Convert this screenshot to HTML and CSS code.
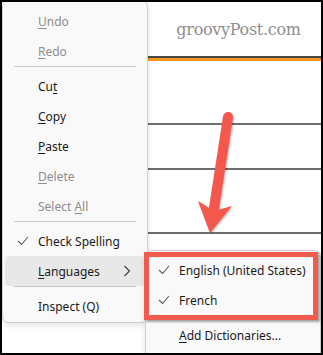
FILE: index.html
```html
<!DOCTYPE html>
<html lang="en">
<head>
  <meta charset="UTF-8" />
  <meta name="viewport" content="width=device-width, initial-scale=1" />
  <title>Context menu - Languages</title>
  <link rel="stylesheet" href="styles.css">
</head>
<body>
  <div class="frame">

    <!-- page behind the menu -->
    <div class="page">
      <div class="site-header">
        <span class="logo">groovyPost.com</span>
      </div>
      <div class="rule-dark"></div>
      <div class="rule-orange"></div>
      <div class="row row-tall"></div>
      <div class="row row-short"></div>
      <div class="row row-tall"></div>
    </div>

    <!-- context menu -->
    <ul class="menu">
      <li class="item disabled"><span><u>U</u>ndo</span></li>
      <li class="item disabled"><span><u>R</u>edo</span></li>
      <li class="sep"></li>
      <li class="item"><span>Cu<u>t</u></span></li>
      <li class="item"><span><u>C</u>opy</span></li>
      <li class="item"><span><u>P</u>aste</span></li>
      <li class="item disabled"><span><u>D</u>elete</span></li>
      <li class="item disabled"><span>Select <u>A</u>ll</span></li>
      <li class="sep"></li>
      <li class="item">
        <svg class="check" width="12" height="10" viewBox="0 0 12 10">
          <path d="M1 5 L4.5 8.5 L11 1" />
        </svg>
        <span>Check Spelling</span>
      </li>
      <li class="item active">
        <span><u>L</u>anguages</span>
        <svg class="chevron" width="8" height="12" viewBox="0 0 8 12">
          <path d="M1.5 1 L6.5 6 L1.5 11" />
        </svg>
      </li>
      <li class="sep"></li>
      <li class="item"><span>Inspect (Q)</span></li>
    </ul>

    <!-- languages submenu -->
    <ul class="menu submenu">
      <li class="item">
        <svg class="check" width="12" height="10" viewBox="0 0 12 10">
          <path d="M1 5 L4.5 8.5 L11 1" />
        </svg>
        <span>English (United States)</span>
      </li>
      <li class="item">
        <svg class="check" width="12" height="10" viewBox="0 0 12 10">
          <path d="M1 5 L4.5 8.5 L11 1" />
        </svg>
        <span>French</span>
      </li>
      <li class="sep"></li>
      <li class="item"><span><u>A</u>dd Dictionaries...</span></li>
    </ul>

    <!-- annotation -->
    <div class="callout"></div>
    <svg class="arrow" width="323" height="355" viewBox="0 0 323 355">
      <line x1="228" y1="117" x2="214" y2="208" />
      <polygon points="210,233 198,201 214,211 232,206" />
    </svg>
  </div>
</body>
</html>
```

FILE: styles.css
```css
*, *::before, *::after {
  box-sizing: border-box;
}

body {
  margin: 0;
  font-family: 'Noto Sans', 'Open Sans', sans-serif;
  background: #ffffff;
}

.frame {
  position: relative;
  width: 323px;
  height: 355px;
  border: 2px solid #000;
  background: #fff;
  overflow: hidden;
}

/* Page behind */
.page {
  padding-left: 146px;
}

.site-header {
  height: 54px;
  padding-left: 8px;
  display: flex;
  align-items: center;
  justify-content: center;
}

.logo {
  font-family: 'DejaVu Serif', 'Liberation Serif', serif;
  font-size: 16px;
  color: #8e8e8e;
  letter-spacing: -0.3px;
}

.rule-dark {
  height: 2px;
  background: #4a4a4a;
}

.rule-orange {
  height: 3px;
  background: #f7941d;
}

.row {
  border-bottom: 2px solid #6e6e6e;
}

.row-tall {
  height: 64px;
}

.row-short {
  height: 45px;
}

/* Menu */
.menu {
  position: absolute;
  left: 0;
  top: -2px;
  width: 146px;
  margin: 0;
  padding: 5px 0 1px;
  list-style: none;
  background: #f9f9f9;
  border: 1px solid #cfcfcf;
  border-radius: 7px;
  box-shadow: 0 2px 6px rgba(0, 0, 0, 0.12);
}

.item {
  position: relative;
  height: 30px;
  display: flex;
  align-items: center;
  padding-left: 35px;
  font-size: 12px;
  color: #1b1b1b;
  white-space: nowrap;
}

.item u {
  text-decoration-thickness: 1px;
  text-underline-offset: 2px;
}

.item.disabled {
  color: #8d8d8d;
}

.item.active {
  background: #e8e8e8;
  margin: 0 2px;
  padding-left: 33px;
  border-radius: 4px;
}

.sep {
  height: 5px;
  margin: 0 11px;
  border-top: 1px solid #c7c7c7;
}

.check {
  position: absolute;
  left: 14px;
  top: 10px;
  fill: none;
  stroke: #5a5a5a;
  stroke-width: 1.1;
}

.chevron {
  position: absolute;
  right: 14px;
  top: 9px;
  fill: none;
  stroke: #3c3c3c;
  stroke-width: 1.1;
}

/* Submenu */
.submenu {
  left: 143px;
  top: 248px;
  width: 176px;
  height: 110px;
  padding-top: 4px;
}

.submenu .item {
  padding-left: 33px;
}

.submenu .check {
  left: 12px;
}

/* Annotation */
.callout {
  position: absolute;
  left: 142px;
  top: 250px;
  width: 174px;
  height: 68px;
  border: 5px solid #f15a4e;
  box-shadow: 2px 2px 2px rgba(0, 0, 0, 0.35);
}

.arrow {
  position: absolute;
  left: -2px;
  top: -2px;
  filter: drop-shadow(1px 1px 1px rgba(0, 0, 0, 0.3));
}

.arrow line {
  stroke: #f4574b;
  stroke-width: 10;
  stroke-linecap: round;
}

.arrow polygon {
  fill: #f4574b;
}
```
